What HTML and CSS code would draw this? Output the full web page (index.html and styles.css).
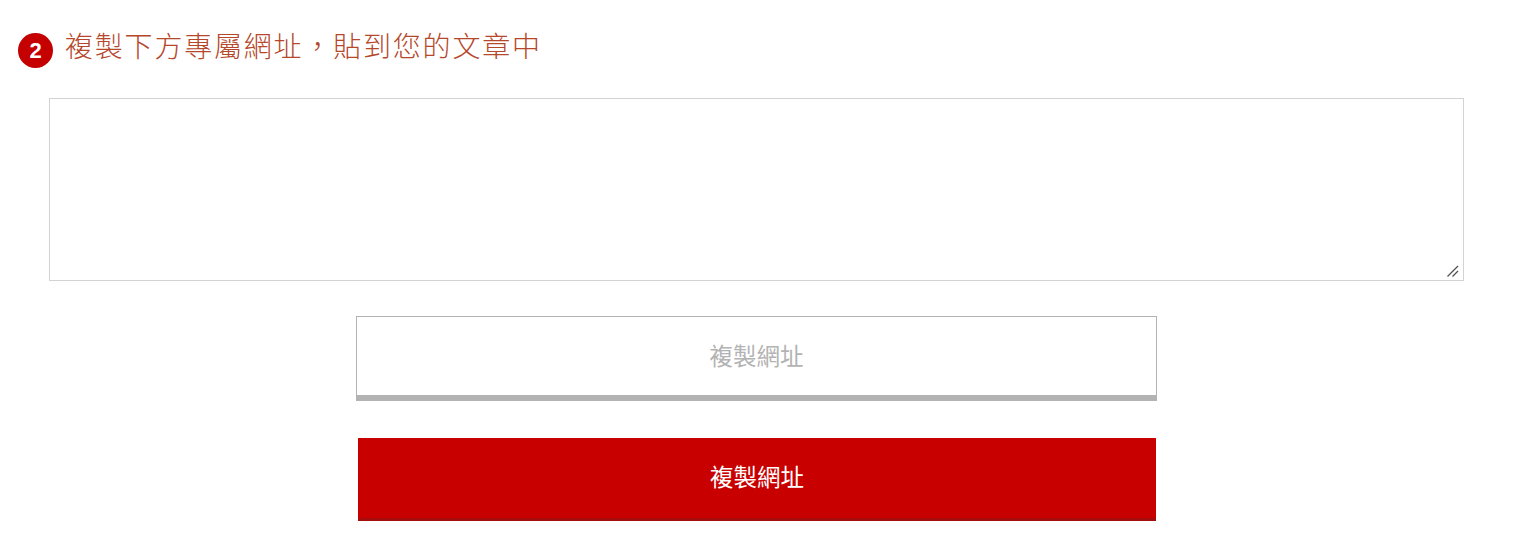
FILE: index.html
```html
<!DOCTYPE html>
<html lang="zh-Hant">
<head>
<meta charset="utf-8">
<link rel="stylesheet" href="styles.css">
</head>
<body>
<div class="page">
  <h2 class="step-title"><span class="step-num">2</span><span class="step-text">複製下方專屬網址，貼到您的文章中</span></h2>
  <div class="area-wrap">
    <div class="box">
      <textarea class="url-box"></textarea>
      <svg class="grip" width="14" height="14" viewBox="0 0 14 14"><path d="M1.5 12.5 L12 2 M6.5 12.5 L12 7" stroke="#505050" stroke-width="1.3" fill="none"/></svg>
    </div>
  </div>
  <div class="actions">
    <button class="btn btn-ghost">複製網址</button>
    <button class="btn btn-red">複製網址</button>
  </div>
</div>
</body>
</html>
```
FILE: styles.css
```css
html, body { margin: 0; padding: 0; background: #fff; }
body { font-family: "Liberation Sans", Arial, "Noto Sans CJK TC", sans-serif; }
.page { padding: 32px 0 0 0; }
.step-title {
  margin: 0 0 0 18px;
  display: flex;
  align-items: flex-start;
  font-weight: normal;
  height: 36px;
}
.step-num {
  width: 35px; height: 35px; border-radius: 50%;
  background: #c40000; color: #fff;
  font-weight: bold; font-size: 22px;
  display: flex; align-items: center; justify-content: center;
  flex: none;
  margin-top: 1px;
}
.step-text {
  margin-left: 12px;
  margin-top: -5px;
  color: #b5472b;
  font-size: 28px;
  letter-spacing: 1.8px;
  font-family: "Noto Sans CJK TC", sans-serif;
  font-weight: 300;
  line-height: 36px;
}
.area-wrap { padding: 30px 50px 0 49px; }
.box { position: relative; width: 1415px; }
.url-box {
  display: block; box-sizing: border-box;
  width: 1415px; height: 183px;
  border: 1px solid #d3d3d3; border-radius: 0;
  margin: 0; padding: 0; resize: none;
}
.grip { position: absolute; right: 4px; bottom: 3px; }
.actions { display: flex; flex-direction: column; align-items: center; padding-top: 35px; }
.btn {
  box-sizing: border-box; margin: 0; border-radius: 0;
  font-family: "Noto Sans CJK TC", sans-serif; font-size: 23.5px;
  cursor: pointer;
}
.btn-ghost {
  width: 801px; height: 85px;
  background: #fff; color: #b3b3b3;
  border: 1px solid #b3b3b3; border-bottom: 6px solid #b3b3b3;
  margin-left: -1px;
  padding: 0 0 2px 0;
}
.btn-red {
  margin-top: 37px;
  width: 798px; height: 83px;
  background: #c80000; color: #fff;
  border: none; border-bottom: 3px solid #a50d0d;
  padding: 0 0 4px 0;
}
```
